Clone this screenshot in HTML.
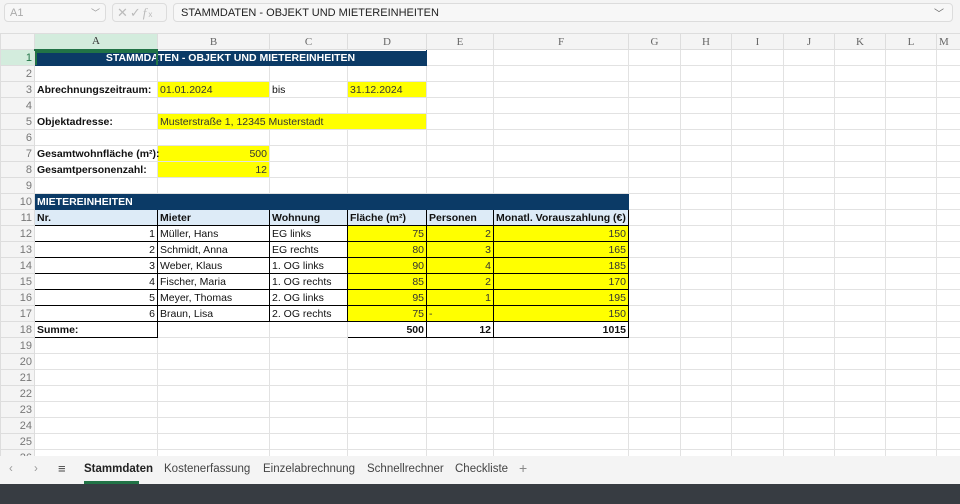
<!DOCTYPE html>
<html><head><meta charset="utf-8"><style>
*{margin:0;padding:0;box-sizing:border-box}
body{width:960px;height:504px;overflow:hidden;background:#fff;font-family:"Liberation Sans",sans-serif;position:relative}
.top{position:absolute;left:0;top:0;width:960px;height:33px;background:#f4f4f4}
.nb{position:absolute;left:4px;top:3px;width:102px;height:19px;border:1px solid #dcdcdc;border-radius:4px;background:#f7f7f7;font-size:11px;color:#aaa;padding:3px 5px}
.fx{position:absolute;left:112px;top:3px;width:55px;height:19px;border:1px solid #dcdcdc;border-radius:4px;color:#bbb;font-size:13px;padding:0 4px;line-height:17px;letter-spacing:2px}
.fb{position:absolute;left:173px;top:3px;width:780px;height:19px;border:1px solid #dcdcdc;border-radius:4px;background:#f7f7f7;font-size:11px;color:#222;padding:3px 7px}
.chev{position:absolute;right:8px;top:1px;color:#666;font-size:10px}
table{position:absolute;left:0;top:33px;width:966px;border-collapse:collapse;table-layout:fixed;font-size:10.5px}
td{height:16px;border:1px solid #e2e2e2;padding:0 2px;white-space:nowrap;overflow:hidden;color:#111;line-height:14px}
tr.h td{background:#f4f4f4;text-align:center;font-family:"Liberation Serif",serif;color:#666;font-size:11px;border-color:#ddd}
td.n{background:#f4f4f4;text-align:right;color:#777;font-size:11px;padding-right:2px;border-color:#ddd}
.y{background:#ffff00;color:#333}
.b{font-weight:bold}
.dk{background:#0b3a66;color:#fff;font-weight:bold;border-color:#0b3a66}
.lb{background:#ddebf7;font-weight:bold}
.k{border:1px solid #000}
.r{text-align:right}
.tabs{position:absolute;left:0;top:456px;width:960px;height:28px;background:#f4f4f4;font-size:11.5px;color:#444}
.tabs span{position:absolute;top:7px}
.dark{position:absolute;left:0;top:484px;width:960px;height:20px;background:#373c42}
</style></head><body>
<div class="top">
<div class="nb">A1<span style="position:absolute;right:5px;top:2px;color:#999;font-size:9px">﹀</span></div>
<div class="fx">✕✓<i style="font-family:'Liberation Serif',serif">f</i><span style="font-size:8px">x</span></div>
<div class="fb">STAMMDATEN - OBJEKT UND MIETEREINHEITEN<span class="chev">﹀</span></div>
</div>
<table>
<colgroup><col style="width:34px"><col style="width:123px"><col style="width:112px"><col style="width:78px"><col style="width:79px"><col style="width:67px"><col style="width:135px"><col style="width:52px"><col style="width:51px"><col style="width:52px"><col style="width:51px"><col style="width:51px"><col style="width:51px"><col style="width:30px"></colgroup>
<tr class="h"><td style="background:#f4f4f4"></td><td style="background:#d3ecdd;border-bottom:2px solid #217346;color:#333">A</td><td>B</td><td>C</td><td>D</td><td>E</td><td>F</td><td>G</td><td>H</td><td>I</td><td>J</td><td>K</td><td>L</td><td style="text-align:left">M</td></tr>
<tr><td class="n" style="background:#d3ecdd;color:#217346">1</td><td colspan="4" class="dk" style="text-align:center;position:relative">STAMMDATEN - OBJEKT UND MIETEREINHEITEN<div style="position:absolute;left:0;top:0;width:123px;height:16px;border:2px solid #217346"></div></td><td></td><td></td><td></td><td></td><td></td><td></td><td></td><td></td><td></td></tr>
<tr><td class="n">2</td><td></td><td></td><td></td><td></td><td></td><td></td><td></td><td></td><td></td><td></td><td></td><td></td><td></td></tr>
<tr><td class="n">3</td><td class="b">Abrechnungszeitraum:</td><td class="y">01.01.2024</td><td>bis</td><td class="y">31.12.2024</td><td></td><td></td><td></td><td></td><td></td><td></td><td></td><td></td><td></td></tr>
<tr><td class="n">4</td><td></td><td></td><td></td><td></td><td></td><td></td><td></td><td></td><td></td><td></td><td></td><td></td><td></td></tr>
<tr><td class="n">5</td><td class="b">Objektadresse:</td><td class="y" colspan="3">Musterstraße 1, 12345 Musterstadt</td><td></td><td></td><td></td><td></td><td></td><td></td><td></td><td></td><td></td></tr>
<tr><td class="n">6</td><td></td><td></td><td></td><td></td><td></td><td></td><td></td><td></td><td></td><td></td><td></td><td></td><td></td></tr>
<tr><td class="n">7</td><td class="b" style="overflow:visible">Gesamtwohnfläche (m²):</td><td class="y r">500</td><td></td><td></td><td></td><td></td><td></td><td></td><td></td><td></td><td></td><td></td><td></td></tr>
<tr><td class="n">8</td><td class="b">Gesamtpersonenzahl:</td><td class="y r">12</td><td></td><td></td><td></td><td></td><td></td><td></td><td></td><td></td><td></td><td></td><td></td></tr>
<tr><td class="n">9</td><td></td><td></td><td></td><td></td><td></td><td></td><td></td><td></td><td></td><td></td><td></td><td></td><td></td></tr>
<tr><td class="n">10</td><td colspan="6" class="dk">MIETEREINHEITEN</td><td></td><td></td><td></td><td></td><td></td><td></td><td></td></tr>
<tr><td class="n">11</td><td class="lb k">Nr.</td><td class="lb k">Mieter</td><td class="lb k">Wohnung</td><td class="lb k">Fläche (m²)</td><td class="lb k">Personen</td><td class="lb k">Monatl. Vorauszahlung (€)</td><td></td><td></td><td></td><td></td><td></td><td></td><td></td></tr>
<tr><td class="n">12</td><td class="k r">1</td><td class="k">Müller, Hans</td><td class="k">EG links</td><td class="k y r">75</td><td class="k y r">2</td><td class="k y r">150</td><td></td><td></td><td></td><td></td><td></td><td></td><td></td></tr>
<tr><td class="n">13</td><td class="k r">2</td><td class="k">Schmidt, Anna</td><td class="k">EG rechts</td><td class="k y r">80</td><td class="k y r">3</td><td class="k y r">165</td><td></td><td></td><td></td><td></td><td></td><td></td><td></td></tr>
<tr><td class="n">14</td><td class="k r">3</td><td class="k">Weber, Klaus</td><td class="k">1. OG links</td><td class="k y r">90</td><td class="k y r">4</td><td class="k y r">185</td><td></td><td></td><td></td><td></td><td></td><td></td><td></td></tr>
<tr><td class="n">15</td><td class="k r">4</td><td class="k">Fischer, Maria</td><td class="k">1. OG rechts</td><td class="k y r">85</td><td class="k y r">2</td><td class="k y r">170</td><td></td><td></td><td></td><td></td><td></td><td></td><td></td></tr>
<tr><td class="n">16</td><td class="k r">5</td><td class="k">Meyer, Thomas</td><td class="k">2. OG links</td><td class="k y r">95</td><td class="k y r">1</td><td class="k y r">195</td><td></td><td></td><td></td><td></td><td></td><td></td><td></td></tr>
<tr><td class="n">17</td><td class="k r">6</td><td class="k">Braun, Lisa</td><td class="k">2. OG rechts</td><td class="k y r">75</td><td class="k y">-</td><td class="k y r">150</td><td></td><td></td><td></td><td></td><td></td><td></td><td></td></tr>
<tr><td class="n">18</td><td class="k b">Summe:</td><td class="k" style="border-top-color:#000;border-bottom-color:#e2e2e2;border-right-color:#e2e2e2"></td><td style="border-top-color:#000"></td><td class="k b r">500</td><td class="k b r">12</td><td class="k b r">1015</td><td></td><td></td><td></td><td></td><td></td><td></td><td></td></tr>
<tr><td class="n">19</td><td></td><td></td><td></td><td></td><td></td><td></td><td></td><td></td><td></td><td></td><td></td><td></td><td></td></tr>
<tr><td class="n">20</td><td></td><td></td><td></td><td></td><td></td><td></td><td></td><td></td><td></td><td></td><td></td><td></td><td></td></tr>
<tr><td class="n">21</td><td></td><td></td><td></td><td></td><td></td><td></td><td></td><td></td><td></td><td></td><td></td><td></td><td></td></tr>
<tr><td class="n">22</td><td></td><td></td><td></td><td></td><td></td><td></td><td></td><td></td><td></td><td></td><td></td><td></td><td></td></tr>
<tr><td class="n">23</td><td></td><td></td><td></td><td></td><td></td><td></td><td></td><td></td><td></td><td></td><td></td><td></td><td></td></tr>
<tr><td class="n">24</td><td></td><td></td><td></td><td></td><td></td><td></td><td></td><td></td><td></td><td></td><td></td><td></td><td></td></tr>
<tr><td class="n">25</td><td></td><td></td><td></td><td></td><td></td><td></td><td></td><td></td><td></td><td></td><td></td><td></td><td></td></tr>
<tr><td class="n">26</td><td></td><td></td><td></td><td></td><td></td><td></td><td></td><td></td><td></td><td></td><td></td><td></td><td></td></tr>
</table>
<div class="tabs">
<span style="left:9px;color:#999">‹</span><span style="left:34px;color:#999">›</span><span style="left:58px;font-size:13px;top:5px">≡</span>
<span style="left:84px;font-weight:bold;color:#222">Stammdaten</span>
<div style="position:absolute;left:84px;top:25px;width:55px;height:3px;background:#217346"></div>
<span style="left:164px">Kostenerfassung</span><span style="left:263px">Einzelabrechnung</span><span style="left:367px">Schnellrechner</span><span style="left:455px">Checkliste</span><span style="left:519px;color:#888;font-size:14px;top:4px">+</span>
</div>
<div class="dark"></div>
</body></html>
